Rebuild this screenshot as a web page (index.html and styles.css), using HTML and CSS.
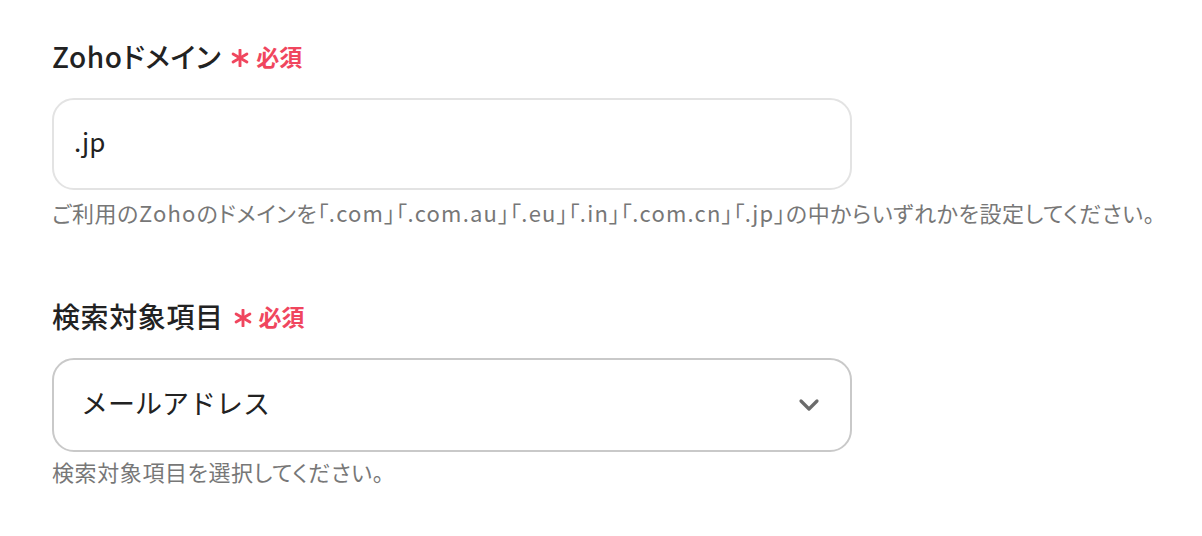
FILE: index.html
```html
<!DOCTYPE html>
<html lang="ja">
<head>
<meta charset="utf-8">
<link rel="stylesheet" href="styles.css">
</head>
<body>
<div class="form">
  <div class="field">
    <div class="label">Zohoドメイン<span class="req"><svg class="ast" width="18" height="18" viewBox="0 0 18 18"><g stroke="#f0465e" stroke-width="2.9" stroke-linecap="round"><path d="M9 1 V17"/><path d="M2.1 5 L15.9 13"/><path d="M2.1 13 L15.9 5"/></g></svg>必須</span></div>
    <div class="input">.jp</div>
    <div class="help">ご利用の<span class="lt">Zoho</span>のドメインを「<span class="lt">.com</span>」「<span class="lt">.com.au</span>」「<span class="lt">.eu</span>」「<span class="lt">.in</span>」「<span class="lt">.com.cn</span>」「<span class="lt">.jp</span>」の中からいずれかを設定してください。</div>
  </div>
  <div class="field">
    <div class="label">検索対象項目<span class="req"><svg class="ast" width="18" height="18" viewBox="0 0 18 18"><g stroke="#f0465e" stroke-width="2.9" stroke-linecap="round"><path d="M9 1 V17"/><path d="M2.1 5 L15.9 13"/><path d="M2.1 13 L15.9 5"/></g></svg>必須</span></div>
    <div class="select">
      <span>メールアドレス</span>
      <svg class="chev" width="22" height="14" viewBox="0 0 22 14"><path d="M3 3 L11 11 L19 3" fill="none" stroke="#6b6b6b" stroke-width="3.2" stroke-linecap="round" stroke-linejoin="round"/></svg>
    </div>
    <div class="help">検索対象項目を選択してください。</div>
  </div>
</div>
</body>
</html>
```
FILE: styles.css
```css
html, body {
  margin: 0;
  padding: 0;
  background: #ffffff;
}
body {
  font-family: "Noto Sans CJK JP", "Noto Sans", sans-serif;
  font-feature-settings: "palt";
  color: #222;
}
.form {
  padding: 38px 0 0 52px;
  width: 800px;
  display: flex;
  flex-direction: column;
  gap: 72px;
}
.field {
  display: flex;
  flex-direction: column;
}
.label {
  font-size: 28px;
  font-weight: 500;
  line-height: 36px;
  color: #222;
  display: flex;
  align-items: center;
  letter-spacing: 0.6px;
}
.req {
  color: #f0465e;
  font-size: 23px;
  font-weight: 700;
  margin-left: 10px;
  display: flex;
  align-items: center;
  letter-spacing: 0;
}
.ast {
  display: block;
  margin-right: 7px;
  margin-top: 3px;
}
.input, .select {
  margin-top: 24px;
  box-sizing: border-box;
  height: 92px;
  border: 2px solid #e3e3e3;
  border-radius: 22px;
  padding: 0 20px 8px;
  display: flex;
  align-items: center;
  font-size: 26px;
  color: #222;
  font-feature-settings: normal;
}
.select {
  border-color: #c9c9c9;
  justify-content: space-between;
  padding: 0 30px 5px 27px;
  font-size: 27px;
  height: 94px;
}
.chev {
  display: block;
  margin-top: 5px;
}
.help {
  margin-top: 8px;
  font-size: 22px;
  color: #777;
  line-height: 28px;
  white-space: nowrap;
  letter-spacing: 0.6px;
}
.select + .help {
  margin-top: 5px;
}
.lt {
  letter-spacing: 1.2px;
}
```
